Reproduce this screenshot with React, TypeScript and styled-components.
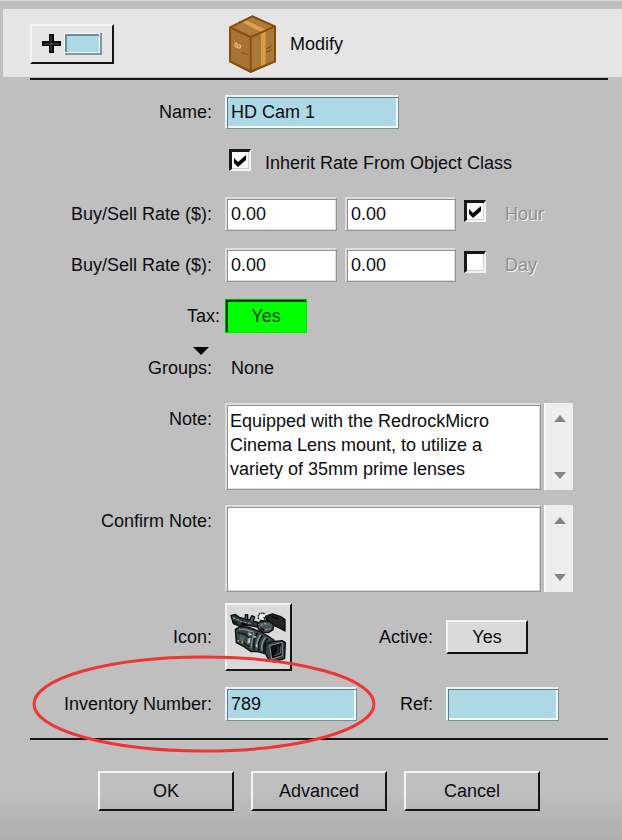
import React from "react";
import styled, { createGlobalStyle, css } from "styled-components";

const GlobalStyle = createGlobalStyle`
  *, *::before, *::after { box-sizing: border-box; }
  html { min-height: 100%; background: #bfbfbf; }
  body {
    margin: 0;
    color: #0c0c10;
    font: 18px/24px "Liberation Sans", Arial, sans-serif;
  }
  button, input, textarea { font: inherit; color: inherit; margin: 0; }
`;

const Page = styled.main`
  min-height: 100vh;
  border-top: 1px solid #dadada;
  padding-top: 8px;
  background: linear-gradient(to top, #aeaeae, #bfbfbf 50px);
`;

const Header = styled.header`
  display: flex;
  align-items: center;
  height: 68px;
  margin-left: 3px;
  padding-top: 2px;
  padding-left: 27px;
  background: #e5e5e5;
`;

const HeaderTitle = styled.h1`
  display: flex;
  align-items: center;
  gap: 14px;
  margin: 0 0 0 115px;
  font-size: 18px;
  font-weight: 400;
`;

const Rule = styled.hr<{ $top: number }>`
  height: 2px;
  margin: ${(p) => p.$top}px 14px 0 30px;
  border: 0;
  background: #151515;
`;

const Button = styled.button<{ $face?: string; $width?: number; $height?: number }>`
  display: inline-flex;
  align-items: center;
  justify-content: center;
  width: ${(p) => p.$width ?? 136}px;
  height: ${(p) => p.$height ?? 40}px;
  padding: 0;
  border: 2px solid;
  border-color: #f4f4f4 #141414 #141414 #f4f4f4;
  border-radius: 0;
  background: ${(p) => p.$face ?? "transparent"};
`;

const TaxButton = styled(Button)`
  border-width: 1px;
  border-color: #00a800 #00e400 #00e400 #00a800;
  background: #00ff00;
  box-shadow: inset 2px 2px #044404;
  color: #064006;
`;

const Row = styled.div<{ $top?: number; $align?: string; $tight?: boolean }>`
  position: relative;
  display: grid;
  grid-template-columns: ${(p) => (p.$tight ? "220px" : "212px")} 1fr;
  column-gap: ${(p) => (p.$tight ? 5 : 13)}px;
  align-items: ${(p) => p.$align ?? "center"};
  min-height: 34px;
  margin-top: ${(p) => p.$top ?? 17}px;
`;

const PairRow = styled(Row)`
  grid-template-columns: 212px 132px 63px 1fr;
`;

const Label = styled.label`
  text-align: right;
  white-space: nowrap;
`;

const NoteLabel = styled(Label)`
  padding-top: 4px;
`;

const Fields = styled.div`
  display: flex;
  align-items: center;
  gap: 8px;
`;

const CheckFields = styled(Fields)`
  gap: 14px;
  padding-left: 4px;
`;

const sunken = css<{ $blue?: boolean }>`
  border: solid;
  border-width: 2px 1px 1px 2px;
  border-radius: 0;
  outline: 0;
  ${(p) =>
    p.$blue
      ? css`
          border-color: #e9f5f8 #768f97 #768f97 #e9f5f8;
          background: #add8e6;
          box-shadow: inset 1px 1px #5f7a83, inset -2px -2px #eefafd;
        `
      : css`
          border-color: #dedede #949494 #949494 #dedede;
          background: #fff;
          box-shadow: inset 1px 1px #8f8f8f, inset -1px -1px #dcdcdc;
        `}
`;

const TextInput = styled.input<{ $blue?: boolean; $width: number }>`
  ${sunken}
  width: ${(p) => p.$width}px;
  height: 34px;
  padding: 0 4px;
`;

const NoteArea = styled.textarea`
  ${sunken}
  display: block;
  width: 316px;
  height: 87px;
  padding: 4px 8px 0 3px;
  resize: none;
  overflow: hidden;
`;

const NoteFields = styled.div`
  display: flex;
  gap: 3px;
`;

const ScrollBar = styled.div`
  display: flex;
  flex-direction: column;
  justify-content: space-between;
  width: 29px;
  border-left: 2px solid #fafafa;
  background: #eeeeee;
`;

const ScrollButton = styled.button`
  display: flex;
  align-items: center;
  justify-content: center;
  height: 30px;
  padding: 0;
  border: 0;
  background: transparent;
`;

const CheckBox = styled.input`
  appearance: none;
  flex: none;
  width: 22px;
  height: 22px;
  margin-bottom: 6px;
  border: solid;
  border-width: 3px 2px 2px 3px;
  border-color: #181818 #f4f4f4 #f4f4f4 #181818;
  background: #fff;
  box-shadow: inset -1px -1px #cfcfcf;
  &:checked {
    background: #fff
      url("data:image/svg+xml,%3Csvg xmlns='http://www.w3.org/2000/svg' viewBox='0 0 17 17'%3E%3Cpath d='M2 6l4 4 8-7v5l-8 7-4-4z'/%3E%3C/svg%3E")
      center / 17px 17px no-repeat;
  }
`;

const DisabledLabel = styled.label`
  padding-left: 11px;
  color: #8e8e8e;
  text-shadow: 1px 1px #f6f6f6;
`;

const GroupsButton = styled.button`
  display: flex;
  flex-direction: column;
  align-items: flex-end;
  justify-self: end;
  padding: 0;
  border: 0;
  background: none;
  line-height: 24px;
  svg { margin-right: 3px; }
`;

const GroupsValue = styled.span`
  padding-left: 6px;
`;

const Actions = styled.footer`
  display: flex;
  flex-wrap: wrap;
  gap: 17px;
  padding: 31px 16px 29px 98px;
`;

const Ring = styled.svg`
  position: absolute;
  top: -33px;
  left: 31px;
  pointer-events: none;
`;

const PlusIcon = () => (
  <svg width="62" height="24" viewBox="0 0 62 24" aria-hidden="true">
    <path d="M8 2h5v7h7v5h-7v7H8v-7H1V9h7z" fill="#0c0c0c" />
    <path d="M10 4v15M3 12h15" stroke="#555" strokeWidth="1" fill="none" />
    <path d="M23 1h38v22H23z" fill="#eefafd" />
    <path d="M60 1v21H24" stroke="#7d979f" strokeWidth="2" fill="none" />
    <path d="M25 3h33v17H25z" fill="#add8e6" />
    <path d="M25 20V3h33" stroke="#6f8b94" strokeWidth="2" fill="none" />
  </svg>
);

const BoxIcon = () => (
  <svg width="47" height="58" viewBox="42 31 141 174" aria-hidden="true">
    <path d="M43 172L107 205 182 172V166L107 196 43 166z" fill="#4c3a20" />
    <path d="M45 68L112 35 180 65V170L107 200 45 170z" fill="#a9793c" />
    <path d="M45 68L107 97V200L45 170z" fill="#a87436" />
    <path d="M45 68L112 35 180 65 107 97z" fill="#ae7c3f" />
    <path d="M80 52L92 46 153 75 140 83z" fill="#dda04c" />
    <path d="M138 83L152 77V181L138 187z" fill="#dc9b43" />
    <path
      d="M45 68L112 35 180 65V170L107 200 45 170zM45 68L107 97 180 65M107 97V200"
      fill="none"
      stroke="#8b4d08"
      strokeWidth="6"
      strokeLinejoin="round"
    />
    <path d="M72 52L112 34 153 52" fill="none" stroke="#5b4020" strokeWidth="2" strokeDasharray="5 3" />
    <path d="M58 115h8v4h-6v8h6m2-6h8v9h-8z" fill="none" stroke="#f3c783" strokeWidth="3" />
    <path d="M78 146l7-2 7 5 8 0M153 133l17-8M153 143l17-8" fill="none" stroke="#77501f" strokeWidth="3" />
  </svg>
);

const CameraIcon = () => (
  <svg width="59" height="53" viewBox="56 56 177 159" aria-hidden="true">
    <g stroke="#0b0d0d" strokeWidth="4" strokeLinejoin="round">
      <path d="M165 72L186 65 211 73 224 82V116L207 107 190 99 176 94z" fill="#222526" />
      <path d="M62 70L74 66 87 75 105 80 124 85 146 91 153 98 148 106 126 101 105 98 88 101 69 94z" fill="#303a3c" />
      <path d="M105 77V67h7v13M117 84l8-14 8 4-5 14" fill="#59666a" />
      <path d="M140 95L154 85 177 87 190 97 188 112 174 121 155 119 144 109z" fill="#475456" />
      <path d="M75 112L88 103 111 104 148 117 173 131 191 144 180 183 164 184 139 177 123 178 101 163 78 151z" fill="#3c494a" />
      <path d="M166 156L183 148 215 145 225 151 223 198 190 209 174 200 164 182z" fill="#363f41" />
    </g>
    <circle cx="155" cy="73" r="9" fill="#f0f0ec" />
    <path d="M145 80c-4-15 5-21 18-16" fill="none" stroke="#111" strokeWidth="4" strokeDasharray="5 2" />
    <path d="M160 74l5 8M150 82l8 6 14-5" stroke="#111" strokeWidth="4" fill="none" />
    <path d="M68 76l15 7 11 5M101 90l20 3M150 100l12-7 12 4M164 112l17-3" fill="none" stroke="#839396" strokeWidth="4" strokeDasharray="9 3" />
    <path d="M67 87l14 5M92 95l16-1M151 108l10 6M184 73l22 7" fill="none" stroke="#080a0a" strokeWidth="5" />
    <path d="M86 111l17 0 27 8M116 118l-4 41M130 122l-8 45" fill="none" stroke="#829091" strokeWidth="4" />
    <path d="M82 121l22 5 14 11M81 139l20 13 18 12" fill="none" stroke="#151c1d" strokeWidth="5" />
    <path d="M90 128l13 4-3 20-14-8z" fill="#536162" />
    <path d="M142 122q-17 20-10 49M157 130q-17 18-11 46M172 139q-16 17-11 42" fill="none" stroke="#101617" strokeWidth="5" />
    <path d="M151 128q-14 18-11 40M165 136q-13 16-10 38" fill="none" stroke="#89999b" strokeWidth="4" />
    <path d="M117 124l6 4M118 137l-2 15M131 132l5 3M136 158l5 3" stroke="#edf2ef" strokeWidth="4" />
    <path d="M82 145h4M94 150h4" stroke="#d5bf35" strokeWidth="5" />
    <path d="M178 160L215 150 216 190 184 200z" fill="#080a0b" stroke="#89999b" strokeWidth="3" />
    <path d="M188 165l20-6v27l-18 5z" fill="#252a2c" />
    <path d="M188 188l3-22 10-4-4 24z" fill="#050606" />
    <path d="M193 190l18-7v-21" fill="none" stroke="#5f6a6e" strokeWidth="3" />
  </svg>
);

const Arrow = ({ down }: { down?: boolean }) => (
  <svg width="12" height="7" viewBox="0 0 12 7" aria-hidden="true">
    <path d={down ? "M0 0h12L6 7z" : "M6 0l6 7H0z"} fill="#858585" />
  </svg>
);

const RateRow = ({ unit, checked }: { unit: string; checked?: boolean }) => (
  <Row>
    <Label htmlFor={`buy-${unit}`}>Buy/Sell Rate ($):</Label>
    <Fields>
      <TextInput id={`buy-${unit}`} $width={112} defaultValue="0.00" />
      <TextInput aria-label={`Sell rate per ${unit}`} $width={111} defaultValue="0.00" />
      <CheckBox type="checkbox" id={`unit-${unit}`} defaultChecked={checked} />
      <DisabledLabel htmlFor={`unit-${unit}`}>{unit}</DisabledLabel>
    </Fields>
  </Row>
);

const NoteRow = ({ id, label, top, text }: { id: string; label: string; top: number; text?: string }) => (
  <Row $top={top} $align="start">
    <NoteLabel htmlFor={id}>{label}</NoteLabel>
    <NoteFields>
      <NoteArea id={id} defaultValue={text} spellCheck={false} />
      <ScrollBar>
        <ScrollButton type="button" aria-label={`Scroll ${label} up`}>
          <Arrow />
        </ScrollButton>
        <ScrollButton type="button" aria-label={`Scroll ${label} down`}>
          <Arrow down />
        </ScrollButton>
      </ScrollBar>
    </NoteFields>
  </Row>
);

export default function App() {
  return (
    <Page>
      <GlobalStyle />
      <Header>
        <Button type="button" $width={84} $face="#e5e5e5" aria-label="Add field">
          <PlusIcon />
        </Button>
        <HeaderTitle>
          <BoxIcon />
          Modify
        </HeaderTitle>
      </Header>
      <Rule $top={1} />
      <form onSubmit={(e) => e.preventDefault()}>
        <Row $top={15}>
          <Label htmlFor="name">Name:</Label>
          <Fields>
            <TextInput id="name" $blue $width={174} defaultValue="HD Cam 1" />
          </Fields>
        </Row>
        <Row>
          <span />
          <CheckFields>
            <CheckBox type="checkbox" id="inherit" defaultChecked />
            <label htmlFor="inherit">Inherit Rate From Object Class</label>
          </CheckFields>
        </Row>
        <RateRow unit="Hour" checked />
        <RateRow unit="Day" />
        <Row $tight>
          <Label htmlFor="tax">Tax:</Label>
          <TaxButton type="button" id="tax" $width={82} $height={34}>
            Yes
          </TaxButton>
        </Row>
        <Row $top={13} $align="end">
          <GroupsButton type="button">
            <svg width="16" height="9" viewBox="0 0 16 9" aria-hidden="true">
              <path d="M0 0h16L8 8z" fill="#000" />
            </svg>
            Groups:
          </GroupsButton>
          <GroupsValue>None</GroupsValue>
        </Row>
        <NoteRow
          id="note"
          label="Note:"
          top={23}
          text={"Equipped with the RedrockMicro\nCinema Lens mount, to utilize a\nvariety of 35mm prime lenses"}
        />
        <NoteRow id="confirm" label="Confirm Note:" top={15} />
        <PairRow $top={11}>
          <Label htmlFor="icon">Icon:</Label>
          <Button type="button" id="icon" $width={67} $height={68} $face="#dadada">
            <CameraIcon />
          </Button>
          <Label htmlFor="active">Active:</Label>
          <Button type="button" id="active" $width={82} $height={34} $face="#dadada">
            Yes
          </Button>
        </PairRow>
        <PairRow $top={16}>
          <Label htmlFor="inventory">Inventory Number:</Label>
          <TextInput id="inventory" $blue $width={132} defaultValue="789" />
          <Label htmlFor="ref">Ref:</Label>
          <TextInput id="ref" $blue $width={113} />
          <Ring width="346" height="100" viewBox="0 0 346 100" aria-hidden="true">
            <ellipse cx="173" cy="50" rx="170" ry="47" fill="none" stroke="#ee3535" strokeWidth="3" />
          </Ring>
        </PairRow>
        <Rule $top={17} />
        <Actions>
          <Button type="submit">OK</Button>
          <Button type="button">Advanced</Button>
          <Button type="button">Cancel</Button>
        </Actions>
      </form>
    </Page>
  );
}
